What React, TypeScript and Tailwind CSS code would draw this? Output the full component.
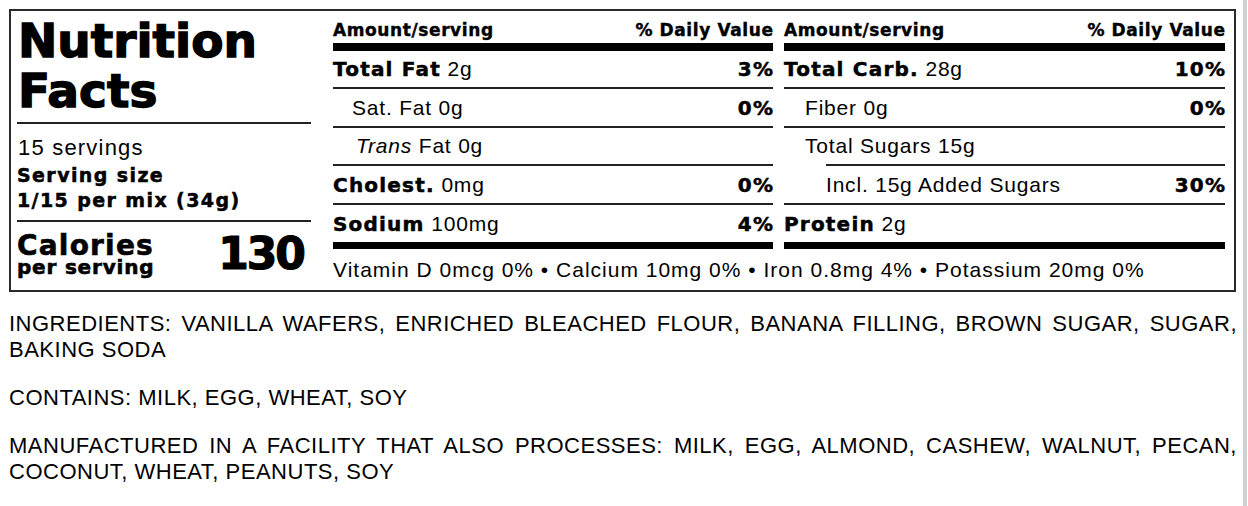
import React from "react";

const B = "font-['DejaVu_Sans',sans-serif] font-bold";
const R = "font-['Liberation_Sans',Arial,sans-serif] font-normal";

function Line({ indent = 0 }: { indent?: number }) {
  return (
    <div className="flex">
      {indent > 0 && <div style={{ width: indent }} />}
      <div className="h-[2px] flex-1 bg-[#222]" />
    </div>
  );
}

function Row({
  h,
  indent = 0,
  left,
  right,
}: {
  h: number;
  indent?: number;
  left: React.ReactNode;
  right?: string;
}) {
  return (
    <div className="flex items-center justify-between" style={{ height: h }}>
      <div className={`${R} text-[21px] leading-[24px] tracking-[0.8px] whitespace-nowrap`} style={{ paddingLeft: indent }}>
        {left}
      </div>
      {right && (
        <div className={`${B} text-[20px] leading-[24px] tracking-[1.2px] -mr-[1.2px] [-webkit-text-stroke:0.5px_black]`}>{right}</div>
      )}
    </div>
  );
}

function Bold({ children }: { children: React.ReactNode }) {
  return <span className={`${B} text-[20px] tracking-[1.2px] [-webkit-text-stroke:0.5px_black]`}>{children}</span>;
}

function Header() {
  return (
    <>
      <div className={`${B} flex justify-between h-[20px] text-[17px] leading-[20px] tracking-[0.6px] [-webkit-text-stroke:0.4px_black]`}>
        <span>Amount/serving</span>
        <span className="-mr-[0.6px]">% Daily Value</span>
      </div>
      <div className="mt-[3px] h-[8px] bg-black" />
    </>
  );
}

export default function App() {
  return (
    <div className="w-[1248px] h-[506px] bg-white flex text-black overflow-hidden">
      <div className="w-[1243px] pl-[9px] pt-[9px]">
        <div className="w-[1227px] h-[283px] border-2 border-[#2a2a2a] flex">
          {/* Left column */}
          <div className="w-[300px] pl-[6px] flex flex-col">
            <div className={`${B} pt-[5px] pl-[1px] text-[47px] leading-[50px] [-webkit-text-stroke:1.4px_black]`}>
              Nutrition
              <br />
              Facts
            </div>
            <div className="mt-[6px] h-[2px] bg-[#222]" />
            <div className={`${R} mt-[11px] pl-[1px] text-[22px] leading-[26px] tracking-[1.2px]`}>15 servings</div>
            <div className={`${B} mt-[2px] text-[19px] leading-[25px] tracking-[1.4px] [-webkit-text-stroke:0.5px_black]`}>
              Serving size
              <br />
              1/15 per mix (34g)
            </div>
            <div className="mt-[7px] h-[2px] bg-[#222]" />
            <div className="mt-[11px] flex justify-between items-start pr-[7px]">
              <div className={`${B} [-webkit-text-stroke:0.6px_black]`}>
                <div className="text-[28px] leading-[26px] tracking-[1.2px]">Calories</div>
                <div className="text-[20px] leading-[16px] tracking-[0.8px]">per serving</div>
              </div>
              <div className={`${B} -mt-[1px] text-[44px] leading-[44px] tracking-[-2px] [-webkit-text-stroke:1.2px_black]`}>130</div>
            </div>
          </div>

          {/* Right area */}
          <div className="ml-[22px] w-[892px] pt-[9px] flex flex-col">
            <div className="flex gap-[11px]">
              <div className="w-[440px] flex flex-col">
                <Header />
                <Row h={36} left={<><Bold>Total Fat</Bold> 2g</>} right="3%" />
                <Line />
                <Row h={37} indent={19} left="Sat. Fat 0g" right="0%" />
                <Line />
                <Row h={36} indent={23} left={<><i>Trans</i> Fat 0g</>} />
                <Line />
                <Row h={37} left={<><Bold>Cholest.</Bold> 0mg</>} right="0%" />
                <Line />
                <Row h={37} left={<><Bold>Sodium</Bold> 100mg</>} right="4%" />
                <div className="h-[7px] bg-black" />
              </div>
              <div className="w-[441px] flex flex-col">
                <Header />
                <Row h={36} left={<><Bold>Total Carb.</Bold> 28g</>} right="10%" />
                <Line />
                <Row h={37} indent={21} left="Fiber 0g" right="0%" />
                <Line />
                <Row h={36} indent={21} left="Total Sugars 15g" />
                <Line indent={42} />
                <Row h={37} indent={42} left="Incl. 15g Added Sugars" right="30%" />
                <Line />
                <Row h={37} left={<><Bold>Protein</Bold> 2g</>} />
                <div className="h-[7px] bg-black" />
              </div>
            </div>
            <div className={`${R} pt-[9px] text-[21px] leading-[24px] tracking-[1px] whitespace-nowrap`}>
              Vitamin D 0mcg 0% • Calcium 10mg 0% • Iron 0.8mg 4% • Potassium 20mg 0%
            </div>
          </div>
        </div>

        <div className={`${R} mt-[19px] w-[1228px] text-[22px] leading-[26px] tracking-[0.5px] flex flex-col gap-[22px]`}>
          <p className="text-justify">
            INGREDIENTS: VANILLA WAFERS, ENRICHED BLEACHED FLOUR, BANANA FILLING, BROWN SUGAR, SUGAR, BAKING SODA
          </p>
          <p>CONTAINS: MILK, EGG, WHEAT, SOY</p>
          <p className="text-justify">
            MANUFACTURED IN A FACILITY THAT ALSO PROCESSES: MILK, EGG, ALMOND, CASHEW, WALNUT, PECAN, COCONUT, WHEAT, PEANUTS, SOY
          </p>
        </div>
      </div>
      <div className="w-[4px] h-full bg-[#d0d0d0]" />
    </div>
  );
}
